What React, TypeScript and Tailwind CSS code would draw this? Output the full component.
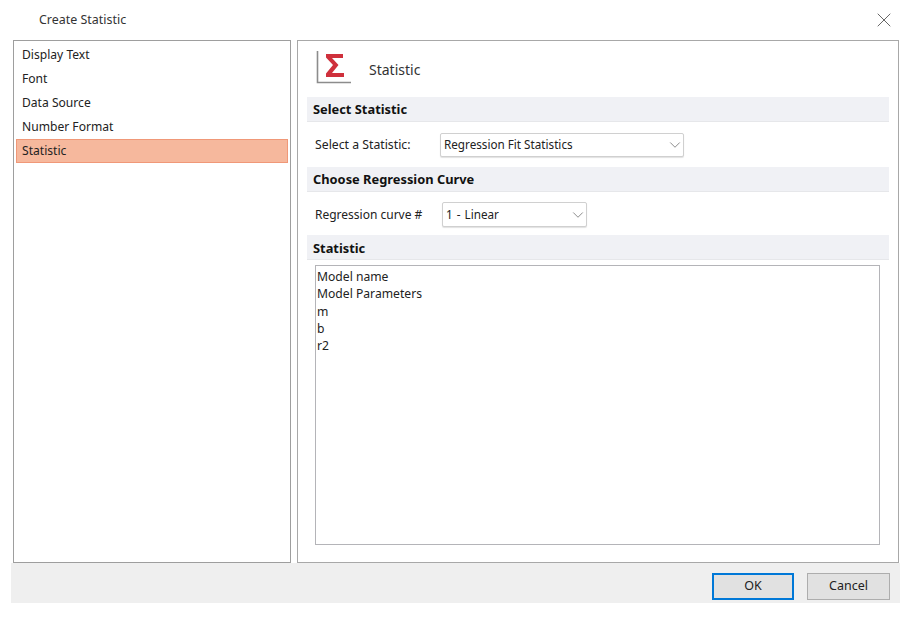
import React from 'react';
import { X, ChevronDown } from 'lucide-react';

const navItems = ['Display Text', 'Font', 'Data Source', 'Number Format', 'Statistic'];
const statistics = ['Model name', 'Model Parameters', 'm', 'b', 'r2'];

const SectionHeader = ({ title, className = 'mt-[1px]' }: { title: string; className?: string }) => (
  <div className="h-[25px] shrink-0 bg-[#f0f1f5] border-b border-[#e6e7ea] pl-[6px] flex items-center text-[12.85px] font-bold text-[#111]">
    <span className={className}>{title}</span>
  </div>
);

const Select = ({ value, className, textClass = '' }: { value: string; className: string; textClass?: string }) => (
  <div className={`${className} bg-white border border-[#d0d0d0] rounded-[2px] shadow-[0_1px_1px_rgba(0,0,0,0.12)] flex items-center justify-between pl-[3px] text-[11.7px] text-[#222]`}>
    <span className={textClass}>{value}</span>
    <ChevronDown size={18} strokeWidth={0.9} className="text-[#555] -mr-[1px]" />
  </div>
);

const App: React.FC = () => {
  return (
    <div className="w-[917px] h-[617px] bg-white relative overflow-hidden font-['Noto_Sans',sans-serif] text-[12px] text-[#222]">
      {/* Title bar */}
      <div className="h-[40px] pl-[39px] pr-[21px] flex items-center justify-between">
        <span className="text-[12.45px] text-[#333]">Create Statistic</span>
        <X size={24} strokeWidth={0.75} className="text-[#333] -mt-[1px]" />
      </div>

      {/* Panels */}
      <div className="h-[523px] pl-[13px] flex gap-[6px]">
        <div className="w-[278px] border border-[#9e9e9e] p-[2px]">
          {navItems.map((item) => (
            <div
              key={item}
              className={`h-[24px] flex items-center text-[12.1px] ${
                item === 'Statistic' ? 'bg-[#f6b89d] border border-[#f09878] pl-[5px]' : 'pl-[6px]'
              }`}
            >
              {item}
            </div>
          ))}
        </div>

        <div className="w-[602px] border border-[#a8a8a8] pl-[9px] pr-[9px] flex flex-col">
          <div className="h-[56px] flex items-center pl-[9px] shrink-0">
            <svg width="36" height="34" viewBox="0 0 36 34" className="-mt-[4px]">
              <path d="M1.5 1V32.5H35" fill="none" stroke="#8c8c8c" strokeWidth="1.6" />
              <path d="M10 4H27V8H16L22.5 15L16 23H28V27H10V23.5L17 15L10 7.5Z" fill="#cf303c" />
            </svg>
            <span className="ml-[17px] text-[14px] text-[#333]">Statistic</span>
          </div>

          <SectionHeader title="Select Statistic" />
          <div className="h-[45px] shrink-0 flex items-start pt-[11px] pl-[8px]">
            <span className="w-[125px] h-[24px] flex items-center text-[12.25px]">Select a Statistic:</span>
            <Select value="Regression Fit Statistics" className="w-[244px] h-[24px]" />
          </div>

          <SectionHeader title="Choose Regression Curve" />
          <div className="h-[43px] shrink-0 flex items-start pt-[10px] pl-[8px]">
            <span className="w-[127px] h-[25px] flex items-center text-[12px]">Regression curve #</span>
            <Select value="1 - Linear" className="w-[145px] h-[25px]" textClass="[word-spacing:1px]" />
          </div>

          <SectionHeader title="Statistic" className="mt-[3px]" />
          <div className="mt-[5px] ml-[8px] mr-[9px] h-[280px] border border-[#b4b4b8] pl-[1px] pt-[2px]">
            {statistics.map((s) => (
              <div key={s} className="h-[17.3px] leading-[17px] text-[12.15px]">{s}</div>
            ))}
          </div>
        </div>
      </div>

      {/* Footer */}
      <div className="ml-[11px] w-[889px] h-[40px] bg-[#efefef] flex items-center justify-end pr-[10px] gap-[13px] pt-[6px]">
        <button className="w-[82px] h-[27px] bg-[#e1e1e1] border-2 border-[#0078d7] text-[12.5px] text-[#222]">OK</button>
        <button className="w-[83px] h-[27px] bg-[#e1e1e1] border border-[#adadad] text-[12.5px] text-[#222]">Cancel</button>
      </div>
    </div>
  );
};

export default App;
